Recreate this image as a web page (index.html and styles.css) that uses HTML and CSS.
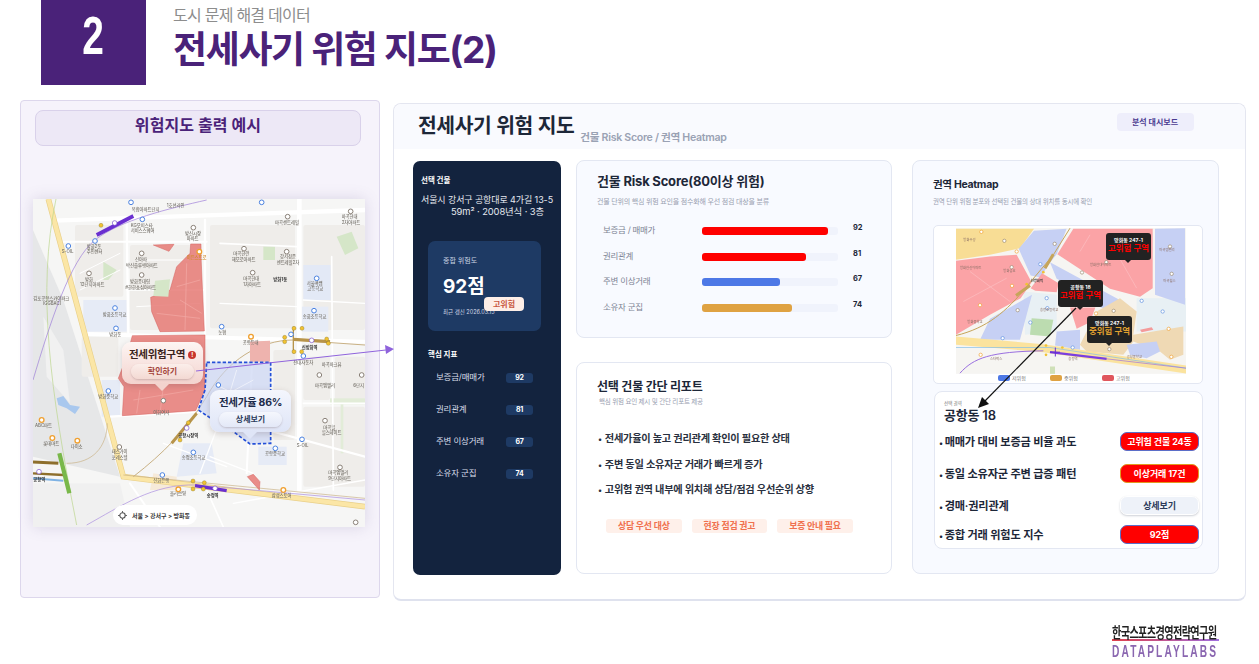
FILE: index.html
```html
<!DOCTYPE html>
<html lang="ko">
<head>
    <meta charset="UTF-8">
    <title>전세사기 위험 지도(2)</title>
    <link rel="stylesheet" href="styles.css">
</head>
<body>
    <header class="top">
        <div class="num"><span>2</span></div>
        <div class="heads">
            <p class="sub">도시 문제 해결 데이터</p>
            <h1 class="title">전세사기 위험 지도(2)</h1>
        </div>
    </header>

    <main class="main">
        <section class="left">
            <div class="left-head">위험지도 출력 예시</div>
            <div class="map">
                <svg class="map-svg" viewBox="39 27 996 984" width="332" height="328">
                    <rect x="39" y="27" width="996" height="984" fill="#f6f6f5"/>
                    <!-- blocks -->
                    <polygon points="39,120 130,330 300,860 39,800" fill="#e6e7e8"/>
                    <polygon points="70,380 130,480 150,640 80,560" fill="#f1f1f1"/>
                    <polygon points="39,880 300,880 330,1011 39,1011" fill="#f0f0f0"/>
                    <g fill="#efedea">
                        <rect x="165" y="105" width="145" height="215" rx="6"/>
                        <rect x="330" y="165" width="215" height="255" rx="6"/>
                        <rect x="570" y="105" width="255" height="310" rx="6"/>
                        <rect x="850" y="105" width="185" height="315" rx="6"/>
                        <rect x="850" y="500" width="80" height="130" rx="6"/>
                        <rect x="945" y="500" width="90" height="130" rx="6"/>
                        <rect x="850" y="650" width="185" height="240" rx="6"/>
                        <rect x="760" y="480" width="65" height="270" rx="6"/>
                        <rect x="185" y="440" width="110" height="120" rx="6"/>
                    </g>
                    <rect x="190" y="330" width="130" height="95" fill="#e6ebf6"/>
                    <rect x="850" y="225" width="82" height="105" fill="#e3e9f6"/>
                    <rect x="845" y="350" width="80" height="75" fill="#e6ebf6"/>
                    <rect x="245" y="570" width="55" height="110" fill="#e6ebf6"/>
                    <rect x="715" y="770" width="85" height="55" fill="#e6ebf6"/>
                    <polygon points="490,760 575,760 590,850 470,860" fill="#e6ebf6"/>
                    <polygon points="400,850 470,860 470,900 390,900" fill="#f6ead9"/>
                    <polygon points="250,215 290,240 265,270 250,270" fill="#d5e6c8"/>
                    <polygon points="950,140 995,125 1015,175 975,195" fill="#d5e6c8"/>
                    <rect x="730" y="170" width="35" height="40" fill="#d5e6c8"/>
                    <rect x="930" y="625" width="105" height="18" fill="#e2ecd8"/>
                    <rect x="962" y="640" width="8" height="150" fill="#e2ecd8"/>
                    <path d="M110 625 L130 618 L150 645 L180 650 L165 672 L140 655 L115 645 Z" fill="#a9c8ee"/>
                    <!-- roads -->
                    <g fill="none" stroke="#fff" stroke-linecap="round">
                        <path d="M100 92 L1035 60" stroke-width="13"/>
                        <path d="M838 27 L838 900" stroke-width="14"/>
                        <path d="M200 432 L1035 455" stroke-width="12"/>
                        <path d="M320 95 L325 430" stroke-width="7"/>
                        <path d="M555 90 L555 430" stroke-width="7"/>
                        <path d="M130 155 L560 155" stroke-width="6"/>
                        <path d="M270 680 L540 665 L1035 800" stroke-width="7"/>
                        <path d="M700 440 L680 850" stroke-width="6"/>
                        <path d="M935 200 L940 900" stroke-width="5"/>
                        <path d="M600 160 L830 170" stroke-width="5"/>
                        <path d="M600 340 L830 350" stroke-width="4"/>
                        <path d="M320 300 L550 300" stroke-width="4"/>
                        <path d="M850 330 L1035 340" stroke-width="4"/>
                        <path d="M850 640 L1035 640" stroke-width="5"/>
                        <path d="M330 880 L420 1011" stroke-width="6"/>
                        <path d="M560 900 L610 1011" stroke-width="5"/>
                        <path d="M640 940 L1035 870" stroke-width="4"/>
                        <path d="M600 690 L540 850 M430 760 L620 830 M700 850 L570 800" stroke-width="4"/>
                        <path d="M180 250 L300 190 M180 300 L300 240 M350 210 L540 210 M350 350 L540 340" stroke-width="3"/>
                    </g>
                    <g fill="none" stroke-linecap="butt">
                        <path d="M85 27 L310 860 L1035 950" stroke="#e9d08a" stroke-width="17"/>
                        <path d="M85 27 L310 860 L1035 950" stroke="#fbe6a6" stroke-width="13"/>
                        <path d="M108 27 C50 300 90 600 170 1005" stroke="#b9d48a" stroke-width="2"/>
                        <path d="M39 570 C90 400 150 210 225 150 C300 90 450 55 560 30" stroke="#9a78d8" stroke-width="2"/>
                        <path d="M230 135 L340 78" stroke="#6a2fd0" stroke-width="11"/>
                        <path d="M200 1005 C300 950 400 880 530 885 L1035 930" stroke="#a88ae0" stroke-width="2"/>
                        <path d="M340 860 C430 790 500 720 560 620 C620 510 720 450 820 450 L1035 465" stroke="#c9b184" stroke-width="3"/>
                        <path d="M140 820 C220 820 260 770 262 700" stroke="#c9b184" stroke-width="2"/>
                        <path d="M310 855 L1035 925" stroke="#c9b184" stroke-width="2"/>
                        <path d="M455 760 L530 670" stroke="#b8944a" stroke-width="9"/>
                        <path d="M820 448 L930 455" stroke="#b8944a" stroke-width="10"/>
                        <path d="M820 410 L820 490" stroke="#b8944a" stroke-width="4"/>
                        <path d="M525 887 L620 902" stroke="#6a2fd0" stroke-width="10"/>
                        <path d="M39 816 L115 820" stroke="#8e6f2c" stroke-width="9"/>
                        <path d="M39 850 L130 855" stroke="#8e6f2c" stroke-width="7"/>
                        <path d="M39 865 L130 872" stroke="#7eb2e4" stroke-width="6"/>
                        <path d="M118 790 L148 910" stroke="#79b84a" stroke-width="13"/>
                    </g>
                    <!-- zones -->
                    <g fill="#e67a75" fill-opacity=".85" stroke="#d4605c" stroke-width="1.5">
                        <polygon points="400,165 462,163 447,184"/>
                        <polygon points="512,162 543,162 543,200 553,423 420,425 395,365 392,322 450,300 470,230 510,190"/>
                        <polygon points="337,437 555,435 555,600 527,662 307,677 312,590 295,565 320,500"/>
                        <polygon points="682,860 700,853 720,875 718,900"/>
                    </g>
                    <path d="M470 290 L540 270 M480 330 L545 370 M410 370 L540 385 M500 220 L495 420 M340 630 L520 600 M430 590 L420 670 M360 600 L350 670" fill="none" stroke="#f3aaa6" stroke-width="2"/>
                    <polygon points="690,455 750,452 750,515 690,515" fill="#eeb3ae"/>
                    <polygon points="405,272 450,268 445,320 400,318" fill="#d5e6c8"/>
                    <polygon points="560,517 752,517 752,760 690,762 640,725 580,690 535,660 555,600" fill="#c7d3f3" fill-opacity=".65" stroke="#2450d8" stroke-width="5" stroke-dasharray="10 6"/>
                    <path d="M600 590 L700 640 M650 540 L620 640 M570 640 L700 570" fill="none" stroke="#eef1fb" stroke-width="3"/>
                    <!-- labels -->
                    <g class="m-label">
                        <text x="335" y="62">복합아파트단지</text>
                        <text x="440" y="50">1호선라인</text>
                        <text x="332" y="110">KG오피스타</text>
                        <text x="332" y="125">서비스스퀘어</text>
                        <text x="495" y="135">방신시장</text>
                        <text x="500" y="150">아파트</text>
                        <text x="200" y="175">방화2동</text>
                        <text x="200" y="190">주민센터</text>
                        <text x="345" y="212">신아파</text>
                        <text x="318" y="230">박신플루맹아파트</text>
                        <text x="330" y="280">방화풍대림</text>
                        <text x="316" y="297">#한한쇼심아파트</text>
                        <text x="195" y="272">방화</text>
                        <text x="180" y="288">12단지아파트</text>
                        <text x="640" y="195">마곡한란</text>
                        <text x="635" y="214">해모로아파트</text>
                        <text x="780" y="204">강서청운</text>
                        <text x="770" y="221">센트레빌2차</text>
                        <text x="670" y="270">마곡현대</text>
                        <text x="670" y="288">1차아파트</text>
                        <text x="760" y="272" class="m-dark">방화1동</text>
                        <text x="765" y="102">마곡센트레빌</text>
                        <text x="965" y="85">마곡현대</text>
                        <text x="965" y="102">2차아파트</text>
                        <text x="860" y="285">서울맥쌤</text>
                        <text x="862" y="300">고등학교</text>
                        <text x="848" y="385">송화초등학교</text>
                        <text x="248" y="378">방화초등학교</text>
                        <text x="268" y="438">방화동</text>
                        <text x="235" y="625">방화중학교</text>
                        <text x="475" y="742" class="m-dark">공항시장역</text>
                        <text x="485" y="808">송정초등학교</text>
                        <text x="275" y="790">태스가이</text>
                        <text x="275" y="808">포레스텔</text>
                        <text x="735" y="795">공항중학교</text>
                        <text x="830" y="770">S-OIL</text>
                        <text x="125" y="190">S-OIL</text>
                        <text x="910" y="718">마곡힐</text>
                        <text x="905" y="733">힐스테이트</text>
                        <text x="925" y="852">마곡엠밸리</text>
                        <text x="925" y="870">9단지아파트</text>
                        <text x="885" y="592">마곡엠밸리</text>
                        <text x="1000" y="592">6단지</text>
                        <text x="905" y="527">마곡파크뷰</text>
                        <text x="820" y="522">전대자동차</text>
                        <text x="845" y="476" class="m-dark">신방화역</text>
                        <text x="668" y="463">공항등대</text>
                        <text x="595" y="431">농협</text>
                        <text x="45" y="712">ABC마트</text>
                        <text x="70" y="765">롯데마트</text>
                        <text x="152" y="774">다이소</text>
                        <text x="40" y="872" class="m-dark">공항역</text>
                        <text x="400" y="876">신화은행</text>
                        <text x="450" y="916">올리브영</text>
                        <text x="560" y="922" class="m-dark">송정역</text>
                        <text x="755" y="922">삼성스토어</text>
                        <text x="40" y="330">김포공항스카이파크</text>
                        <text x="68" y="344">(GGBAC)</text>
                        <text x="500" y="206" class="m-orange">이든스트로</text>
                        <text x="400" y="672">이화여자</text>
                    </g>
                    <g fill="#fff" stroke="#8a8178" stroke-width="3">
                        <circle cx="520" cy="113" r="7"/><circle cx="365" cy="190" r="7"/>
                        <circle cx="207" cy="250" r="7"/><circle cx="365" cy="255" r="7"/>
                        <circle cx="672" cy="176" r="7"/><circle cx="800" cy="185" r="7"/>
                        <circle cx="803" cy="80" r="7"/><circle cx="992" cy="64" r="7"/>
                        <circle cx="698" cy="248" r="7"/><circle cx="298" cy="771" r="7"/>
                        <circle cx="915" cy="692" r="7"/><circle cx="960" cy="832" r="7"/>
                        <circle cx="898" cy="555" r="7"/><circle cx="1025" cy="555" r="7"/>
                        <circle cx="430" cy="632" r="7"/><circle cx="1007" cy="997" r="7"/>
                    </g>
                    <g fill="#fff" stroke="#4b82e0" stroke-width="3">
                        <circle cx="145" cy="168" r="7"/><circle cx="225" cy="153" r="7"/>
                        <circle cx="367" cy="88" r="7"/><circle cx="333" cy="37" r="7"/>
                        <circle cx="725" cy="37" r="7"/><circle cx="285" cy="354" r="7"/>
                        <circle cx="288" cy="415" r="7"/><circle cx="265" cy="603" r="7"/>
                        <circle cx="605" cy="410" r="7"/><circle cx="595" cy="585" r="7"/>
                        <circle cx="882" cy="362" r="7"/><circle cx="890" cy="265" r="7"/>
                        <circle cx="846" cy="748" r="7"/><circle cx="766" cy="775" r="7"/>
                        <circle cx="520" cy="787" r="7"/><circle cx="427" cy="855" r="7"/>
                        <circle cx="813" cy="433" r="7"/><circle cx="850" cy="498" r="7"/>
                    </g>
                    <g fill="#fff" stroke="#f0a030" stroke-width="4">
                        <circle cx="65" cy="690" r="7"/><circle cx="97" cy="744" r="7"/>
                        <circle cx="172" cy="752" r="7"/><circle cx="693" cy="440" r="7"/>
                        <circle cx="538" cy="185" r="7"/><circle cx="475" cy="898" r="7"/>
                        <circle cx="790" cy="900" r="7"/>
                    </g>
                    <g fill="#f1c232" stroke="#7a6a20" stroke-width="1">
                        <circle cx="243" cy="106" r="6"/><circle cx="822" cy="415" r="6"/>
                        <circle cx="846" cy="415" r="6"/><circle cx="794" cy="442" r="6"/>
                        <circle cx="794" cy="455" r="6"/><circle cx="822" cy="485" r="6"/>
                        <circle cx="845" cy="485" r="6"/><circle cx="920" cy="447" r="6"/>
                        <circle cx="925" cy="460" r="6"/><circle cx="505" cy="698" r="6"/>
                        <circle cx="480" cy="750" r="6"/><circle cx="519" cy="873" r="6"/>
                        <circle cx="519" cy="897" r="6"/><circle cx="553" cy="878" r="6"/>
                        <circle cx="550" cy="897" r="6"/>
                    </g>
                    <g fill="#fff" stroke="#7a4fd0" stroke-width="2">
                        <circle cx="284" cy="99" r="7"/><circle cx="585" cy="895" r="7"/>
                        <circle cx="875" cy="451" r="7"/><circle cx="500" cy="714" r="7"/>
                        <circle cx="57" cy="845" r="7"/>
                    </g>
                </svg>

                <div class="callout callout-red">
                    <div class="callout-title">전세위험구역 <i class="alert">!</i></div>
                    <div class="callout-btn btn-red">확인하기</div>
                </div>
                <div class="callout callout-blue">
                    <div class="callout-title title-navy">전세가율 86%</div>
                    <div class="callout-btn btn-blue">상세보기</div>
                </div>
                <div class="crumb">
                    <svg width="9" height="9" viewBox="0 0 10 10"><circle cx="5" cy="5" r="3" fill="none" stroke="#555" stroke-width="1.2"/><path d="M5 0v2M5 8v2M0 5h2M8 5h2" stroke="#555" stroke-width="1"/></svg>
                    <span>서울 &gt; 강서구 &gt; 방화동</span>
                </div>
            </div>
        </section>

        <section class="dash">
            <div class="dash-head">
                <h2>전세사기 위험 지도</h2>
                <span class="dash-sub">건물 Risk Score / 권역 Heatmap</span>
                <span class="dash-tag">분석 대시보드</span>
            </div>
            <div class="dash-body">
                <aside class="side">
                    <div class="side-label">선택 건물</div>
                    <div class="side-addr">서울시 강서구 공항대로 4가길 13-5</div>
                    <div class="side-addr2">59m² · 2008년식 · 3층</div>
                    <div class="score">
                        <div class="score-label">종합 위험도</div>
                        <div class="score-num">92점</div>
                        <div class="score-badge">고위험</div>
                        <div class="score-date">최근 갱신 2026.03.15</div>
                    </div>
                    <div class="side-sec">핵심 지표</div>
                    <div class="kpi"><span>보증금/매매가</span><b>92</b></div>
                    <div class="kpi"><span>권리관계</span><b>81</b></div>
                    <div class="kpi"><span>주변 이상거래</span><b>67</b></div>
                    <div class="kpi"><span>소유자 군집</span><b>74</b></div>
                </aside>

                <div class="mid">
                    <div class="card card-score">
                        <h3>건물 Risk Score(80이상 위험)</h3>
                        <p class="card-sub">건물 단위의 핵심 위험 요인을 점수화해 우선 점검 대상을 분류</p>
                        <div class="bar-row"><span class="bar-name">보증금 / 매매가</span><div class="bar"><i class="fill red" style="width:126px"></i></div><b>92</b></div>
                        <div class="bar-row"><span class="bar-name">권리관계</span><div class="bar"><i class="fill red" style="width:104px"></i></div><b>81</b></div>
                        <div class="bar-row"><span class="bar-name">주변 이상거래</span><div class="bar"><i class="fill blue" style="width:78px"></i></div><b>67</b></div>
                        <div class="bar-row"><span class="bar-name">소유자 군집</span><div class="bar"><i class="fill gold" style="width:90px"></i></div><b>74</b></div>
                    </div>
                    <div class="card card-report">
                        <h3>선택 건물 간단 리포트</h3>
                        <p class="card-sub">핵심 위험 요인 제시 및 간단 리포트 제공</p>
                        <ul class="report">
                            <li>전세가율이 높고 권리관계 확인이 필요한 상태</li>
                            <li>주변 동일 소유자군 거래가 빠르게 증가</li>
                            <li>고위험 권역 내부에 위치해 상담/점검 우선순위 상향</li>
                        </ul>
                        <div class="tags">
                            <span>상담 우선 대상</span>
                            <span>현장 점검 권고</span>
                            <span>보증 안내 필요</span>
                        </div>
                    </div>
                </div>

                <div class="card card-heat">
                    <h4>권역 Heatmap</h4>
                    <p class="card-sub">권역 단위 위험 분포와 선택된 건물의 상대 위치를 동시에 확인</p>
                    <div class="heat-box">
                        <div class="heat-map">
                            <svg class="heat-svg" viewBox="138 220 690 437" width="230" height="146">
                                <rect x="138" y="220" width="690" height="437" fill="#f6f5f2"/>
                                <rect x="680" y="430" width="148" height="100" fill="#e8f0f4"/>
                                <polygon points="340,410 440,420 440,530 345,540" fill="#e8f0f4"/>
                                <polygon points="365,490 430,495 420,545 360,540" fill="#bcdcb0"/>
                                <polygon points="138,222 372,222 330,280 240,300 138,315" fill="#f8dd95"/>
                                <polygon points="138,318 240,305 320,300 365,382 332,430 240,480 138,540" fill="#fba3a6"/>
                                <polygon points="372,228 470,222 440,298 415,330 392,368 362,362 326,282" fill="#c6d0f4"/>
                                <polygon points="490,222 728,222 728,400 690,426 600,402 442,298" fill="#fba3a6"/>
                                <polygon points="420,322 628,435 600,466 555,452 515,410 440,372" fill="#c6d0f4"/>
                                <polygon points="735,222 825,220 825,450 735,420" fill="#c6d0f4"/>
                                <polygon points="396,355 446,385 440,412 376,408 362,400" fill="#fba3a6"/>
                                <polygon points="480,458 556,458 540,502 500,522" fill="#fba3a6"/>
                                <polygon points="366,420 330,555 210,555 240,492" fill="#c6d0f4"/>
                                <polygon points="630,430 680,470 670,540 820,515 820,600 780,615 750,590 670,560 640,600 530,590 510,570 560,470" fill="#efd9b4"/>
                                <polygon points="440,530 510,525 510,585 435,572" fill="#c6d0f4"/>
                                <polygon points="650,570 740,560 750,590 710,610 660,600" fill="#c6d0f4"/>
                                <polygon points="690,525 725,517 730,525 695,532" fill="#f49a9a"/>
                                <polygon points="138,545 400,568 828,632 828,656 400,592 138,570" fill="#fbe39e"/>
                                <path d="M138 578 L420 578 L828 640" fill="none" stroke="#80bde8" stroke-width="2"/>
                                <path d="M150 655 C190 610 240 590 400 588" fill="none" stroke="#9a6fe0" stroke-width="3"/>
                                <path d="M420 592 L590 612" fill="none" stroke="#7a3fe0" stroke-width="7"/>
                                <path d="M590 612 L828 640" fill="none" stroke="#9a6fe0" stroke-width="2"/>
                                <path d="M436 578 L436 605 M420 592 L450 592" fill="none" stroke="#6a2fd0" stroke-width="3"/>
                                <path d="M138 542 C230 520 290 470 350 395 L430 300 L480 220" fill="none" stroke="#c6a55a" stroke-width="3"/>
                                <path d="M318 422 L360 392 M405 340 L430 298" fill="none" stroke="#c6a55a" stroke-width="9"/>
                                <rect x="420" y="635" width="15" height="22" fill="#cfe0b8"/>
                                <path d="M540 240 L510 290 M600 260 L680 400 M180 350 L300 440 M160 440 L290 370" fill="none" stroke="#fcc0c2" stroke-width="2"/>
                                <g fill="#fff" stroke="#9a8a70" stroke-width="2">
                                    <circle cx="283" cy="258" r="5"/><circle cx="305" cy="337" r="5"/>
                                    <circle cx="434" cy="267" r="5"/><circle cx="589" cy="322" r="5"/>
                                    <circle cx="516" cy="353" r="5"/><circle cx="780" cy="275" r="5"/>
                                    <circle cx="785" cy="357" r="5"/><circle cx="323" cy="466" r="5"/>
                                    <circle cx="611" cy="468" r="5"/><circle cx="598" cy="583" r="5"/>
                                </g>
                                <g fill="#fff" stroke="#f0a030" stroke-width="2">
                                    <circle cx="214" cy="231" r="5"/><circle cx="320" cy="290" r="5"/>
                                    <circle cx="210" cy="451" r="5"/><circle cx="306" cy="393" r="5"/>
                                    <circle cx="558" cy="476" r="5"/><circle cx="776" cy="522" r="5"/>
                                    <circle cx="784" cy="606" r="5"/><circle cx="212" cy="600" r="5"/>
                                </g>
                                <g fill="#fff" stroke="#5a8ee0" stroke-width="2">
                                    <circle cx="391" cy="328" r="5"/><circle cx="410" cy="430" r="5"/>
                                    <circle cx="412" cy="460" r="5"/><circle cx="361" cy="503" r="5"/>
                                    <circle cx="695" cy="438" r="5"/><circle cx="758" cy="470" r="5"/>
                                    <circle cx="278" cy="550" r="5"/><circle cx="488" cy="578" r="5"/>
                                </g>
                                <g fill="#f1c232">
                                    <circle cx="400" cy="352" r="4"/><circle cx="350" cy="388" r="4"/>
                                    <circle cx="408" cy="572" r="4"/><circle cx="457" cy="578" r="4"/>
                                    <circle cx="408" cy="600" r="4"/>
                                </g>
                                <g class="h-label">
                                    <text x="160" y="258">방화우성</text>
                                    <text x="150" y="343">방화한신아파트</text>
                                    <text x="280" y="352">방화금호</text>
                                    <text x="362" y="382" class="m-dark">신방화역</text>
                                    <text x="540" y="335">방화현대아파트</text>
                                    <text x="748" y="290">마곡엠밸리</text>
                                    <text x="760" y="382">마곡힐스</text>
                                    <text x="390" y="470">송정초등학교</text>
                                    <text x="172" y="504">방화중학교</text>
                                    <text x="475" y="616">송정역</text>
                                    <text x="650" y="610">공항중학교</text>
                                    <text x="240" y="615">스타벅스</text>
                                </g>
                            </svg>
                            <div class="pin pin-a"><small>공항동 18</small><b class="hi">고위험 구역</b></div>
                            <div class="pin pin-b"><small>방화동 247-1</small><b class="hi">고위험 구역</b></div>
                            <div class="pin pin-c"><small>방화동 247-1</small><b class="md">중위험 구역</b></div>
                        </div>
                        <div class="legend">
                            <span><i class="sw sw-low"></i>저위험</span>
                            <span><i class="sw sw-mid"></i>중위험</span>
                            <span><i class="sw sw-high"></i>고위험</span>
                        </div>
                    </div>
                    <div class="detail">
                        <div class="detail-label">선택 권역</div>
                        <div class="detail-name">공항동 18</div>
                        <div class="d-row"><span>매매가 대비 보증금 비율 과도</span><b class="pill pill-blue">고위험 건물 24동</b></div>
                        <div class="d-row"><span>동일 소유자군 주변 급증 패턴</span><b class="pill pill-orange">이상거래 17건</b></div>
                        <div class="d-row"><span>경매·권리관계</span><b class="pill pill-light">상세보기</b></div>
                        <div class="d-row d-last"><span>종합 거래 위험도 지수</span><b class="pill pill-blue">92점</b></div>
                    </div>
                </div>
            </div>
        </section>
    </main>

    <footer class="foot">
        <div class="logo">
            <div class="logo-ko"><span>한국스포츠경영전략연구원</span></div>
            <div class="logo-en"><span>DATAPLAYLABS</span></div>
        </div>
    </footer>

    <!-- arrows run across panels -->
    <svg class="arrows" width="1259" height="664">
        <line x1="196" y1="371" x2="386" y2="350" stroke="#8f63dc" stroke-width="1"/>
        <polygon points="394,349 385,345 386,354" fill="#8f63dc"/>
        <line x1="1076" y1="308" x2="984" y2="402" stroke="#111" stroke-width="1.2"/>
        <polygon points="978,408 982,397 989,404" fill="#111"/>
    </svg>
</body>
</html>
```

FILE: styles.css
```css
* {
    box-sizing: border-box;
}
body {
    margin: 0;
    width: 1259px;
    height: 664px;
    overflow: hidden;
    position: relative;
    background: #fff;
    font-family: Inter, "Noto Sans CJK KR", sans-serif;
    color: #1d2738;
}
h1, h2, h3, h4, p, ul {
    margin: 0;
    padding: 0;
}

/* top title */
.top {
    display: flex;
    height: 85px;
    padding-left: 41px;
}
.num {
    width: 105px;
    height: 85px;
    background: #4a2279;
    color: #fff;
    display: flex;
    justify-content: center;
    padding-top: 5px;
}
.num span {
    font: bold 54px/60px "Liberation Sans", sans-serif;
    transform: scaleX(.72);
}
.heads {
    padding-left: 27px;
}
.sub {
    font-size: 16px;
    line-height: 20px;
    margin-top: 5px;
    color: #8d8d8d;
    letter-spacing: -.75px;
}
.title {
    font-size: 37px;
    line-height: 46px;
    margin-top: 2px;
    font-weight: 700;
    color: #4a2279;
    letter-spacing: -1.35px;
}

/* layout */
.main {
    display: flex;
    gap: 13px;
    padding: 15px 0 0 20px;
}

/* left panel */
.left {
    width: 360px;
    height: 498px;
    background: #f6f3fb;
    border: 1px solid #ddd7ec;
    border-radius: 4px;
    padding: 9px 18px 0 12px;
}
.left-head {
    margin-left: 2px;
    width: 326px;
    height: 36px;
    background: #ede8f6;
    border: 1px solid #d9d1ea;
    border-radius: 8px;
    text-align: center;
    font-size: 16px;
    line-height: 28px;
    font-weight: 700;
    color: #4a2279;
    letter-spacing: .1px;
}
.map {
    position: relative;
    width: 332px;
    height: 328px;
    margin-top: 53px;
    box-shadow: 0 0 14px rgba(90, 80, 130, .18);
}
.map-svg {
    display: block;
    filter: blur(.4px);
}
.m-label text {
    font-size: 13px;
    fill: #77736c;
    font-weight: 500;
}
.m-label .m-dark, .h-label .m-dark {
    fill: #333;
    font-weight: 700;
}
.m-label .m-orange {
    fill: #d08a2a;
}
.h-label text {
    font-size: 10px;
    fill: #8b6f66;
}
.callout {
    position: absolute;
    width: 81px;
    height: 42px;
    border-radius: 9px;
    box-shadow: 0 2px 6px rgba(80, 60, 60, .22);
    display: flex;
    flex-direction: column;
    align-items: center;
    padding-top: 5px;
}
.callout::after {
    content: "";
    position: absolute;
    left: 33px;
    bottom: -7px;
    border: 7px solid transparent;
    border-bottom: 0;
    border-top-color: inherit;
}
.callout-red {
    left: 89px;
    top: 143px;
    background: linear-gradient(#fdf5f3, #f3d3ce);
    border-top-color: #f3d3ce;
}
.callout-blue {
    left: 177px;
    top: 191px;
    height: 42px;
    background: linear-gradient(#f4f6fd, #dfe5f7);
    border-top-color: #dfe5f7;
}
.callout-title {
    font-size: 10.5px;
    line-height: 15px;
    font-weight: 700;
    color: #3a2420;
    letter-spacing: -.3px;
    white-space: nowrap;
    display: flex;
    align-items: center;
    gap: 3px;
}
.title-navy {
    color: #1b2a4a;
}
.alert {
    width: 8px;
    height: 8px;
    border-radius: 50%;
    background: #c8352b;
    color: #fff;
    font-size: 6px;
    line-height: 8px;
    text-align: center;
    font-style: normal;
}
.callout-btn {
    width: 63px;
    height: 15px;
    margin-top: 2px;
    border-radius: 8px;
    font-size: 8px;
    line-height: 15px;
    text-align: center;
    font-weight: 700;
    box-shadow: 0 1px 2px rgba(90, 60, 60, .25);
}
.btn-red {
    background: linear-gradient(#fbeeea, #f3d9d3);
    color: #a3443a;
}
.btn-blue {
    background: linear-gradient(#f5f7fd, #e3e8f7);
    color: #2b3a5a;
}
.crumb {
    position: absolute;
    left: 80px;
    top: 306px;
    width: 84px;
    height: 20px;
    background: #fff;
    border-radius: 10px;
    display: flex;
    align-items: center;
    gap: 5px;
    padding-left: 5px;
    font-size: 6px;
    font-weight: 700;
    color: #333;
    white-space: nowrap;
}

/* dashboard */
.dash {
    width: 853px;
    height: 498px;
    margin-top: 3px;
    background: #fff;
    border: 1px solid #e4e6f0;
    border-bottom: 2px solid #dfe2ee;
    border-radius: 8px;
}
.dash-head {
    height: 45px;
    background: #f9fafe;
    border-radius: 8px 8px 0 0;
    display: flex;
    padding-left: 24px;
}
.dash-head h2 {
    font-size: 20.4px;
    line-height: 30px;
    margin-top: 7px;
    font-weight: 600;
    color: #1d2738;
    letter-spacing: -.4px;
}
.dash-sub {
    font-size: 10.6px;
    font-weight: 600;
    color: #9aa2b4;
    letter-spacing: -.3px;
    margin: 25px 0 0 6px;
}
.dash-tag {
    margin: 9px 0 0 390px;
    width: 77px;
    height: 18px;
    background: #eeeefb;
    border-radius: 4px;
    font-size: 8px;
    line-height: 18px;
    text-align: center;
    font-weight: 700;
    color: #4a3a90;
}
.dash-body {
    display: flex;
    padding: 12px 0 0 19px;
}

/* dark side column */
.side {
    width: 148px;
    height: 414px;
    background: #13233e;
    border-radius: 7px;
    color: #fff;
    padding: 15px 8px 0;
}
.side-label {
    font-size: 7.5px;
    line-height: 10px;
    font-weight: 700;
}
.side-addr {
    font-size: 9px;
    line-height: 12px;
    margin-top: 8px;
    white-space: nowrap;
    color: #e6e9f0;
    letter-spacing: -.1px;
}
.side-addr2 {
    font-size: 9.4px;
    line-height: 12px;
    padding-left: 30px;
    white-space: nowrap;
    color: #e6e9f0;
    letter-spacing: -.1px;
}
.score {
    position: relative;
    width: 113px;
    height: 90px;
    margin: 23px 0 0 7px;
    background: #1e3a64;
    border-radius: 7px;
    padding: 15px 0 0 15px;
}
.score-label {
    font-size: 7px;
    line-height: 9px;
    color: #c8d2e2;
}
.score-num {
    font-size: 19px;
    line-height: 24px;
    font-weight: 700;
    margin-top: 10px;
}
.score-badge {
    position: absolute;
    left: 56px;
    top: 56px;
    width: 40px;
    height: 14px;
    background: #fdeee7;
    border-radius: 4px;
    color: #c9583f;
    font-size: 8px;
    line-height: 14px;
    text-align: center;
    font-weight: 700;
}
.score-date {
    font-size: 5.5px;
    line-height: 8px;
    margin-top: 9px;
    color: #d5dbe8;
}
.side-sec {
    font-size: 7.5px;
    line-height: 10px;
    font-weight: 700;
    margin: 19px 0 0 7px;
}
.kpi {
    display: flex;
    justify-content: space-between;
    height: 32px;
    width: 97px;
    margin-left: 15px;
    font-size: 8.5px;
    line-height: 12px;
    color: #d9deea;
    letter-spacing: -.2px;
}
.side-sec + .kpi {
    margin-top: 11px;
}
.kpi b {
    width: 27px;
    height: 10px;
    margin-top: 2px;
    background: #1e3a64;
    border-radius: 3px;
    color: #fff;
    font-size: 7px;
    line-height: 10px;
    text-align: center;
}

/* middle cards */
.mid {
    width: 316px;
    margin: -1px 0 0 15px;
    display: flex;
    flex-direction: column;
    gap: 24px;
}
.card {
    background: #fff;
    border: 1px solid #e3e7f2;
    border-radius: 8px;
}
.card h3 {
    font-size: 13px;
    font-weight: 700;
    letter-spacing: -.2px;
    color: #1d2738;
}
.card-sub {
    font-size: 7px;
    color: #99a0b0;
    letter-spacing: -.2px;
}
.card-score {
    height: 178px;
    background: #f8faff;
    padding: 11px 20px 0;
}
.card-score h3 {
    line-height: 18px;
}
.card-score .card-sub {
    margin: 7px 0 18px;
    line-height: 10px;
}
.bar-row {
    display: flex;
    height: 25.7px;
    padding-left: 6px;
    font-size: 8.5px;
}
.bar-name {
    width: 99px;
    line-height: 10px;
    color: #7d8494;
    letter-spacing: -.3px;
}
.bar {
    width: 136px;
    height: 8px;
    margin-top: 2px;
    background: #f0f3fc;
    border-radius: 3px;
}
.fill {
    display: block;
    height: 8px;
    border-radius: 3px;
}
.red { background: #ff0000; }
.blue { background: #4d78e6; }
.gold { background: #dfa242; }
.bar-row b {
    margin: -2px 0 0 15px;
    font-size: 7.5px;
    line-height: 10px;
}
.card-report {
    height: 212px;
    padding: 15px 20px 0;
}
.card-report h3 {
    font-size: 12px;
    line-height: 17px;
}
.card-report .card-sub {
    font-size: 6.5px;
    line-height: 9px;
    margin: 3px 0 0 2px;
}
.report {
    list-style: none;
    margin-top: 24px;
}
.report li {
    font-size: 10.2px;
    line-height: 14px;
    height: 25.5px;
    font-weight: 600;
    letter-spacing: -.25px;
    color: #2a3140;
    white-space: nowrap;
}
.report li::before {
    content: "•";
    font-size: 8px;
    margin: 0 3px 0 1px;
}
.tags {
    display: flex;
    gap: 10px;
    margin: 11px 0 0 9px;
}
.tags span {
    height: 14px;
    padding: 0 12px;
    background: #fef0ea;
    border-radius: 3px;
    color: #f0714f;
    font-size: 8.9px;
    line-height: 14px;
    font-weight: 700;
    letter-spacing: -.2px;
}

/* heatmap card */
.card-heat {
    width: 307px;
    height: 414px;
    margin: -1px 0 0 20px;
    background: #f8faff;
    padding: 16px 15px 0 20px;
}
.card-heat h4 {
    font-size: 10.5px;
    line-height: 15px;
    font-weight: 700;
    letter-spacing: -.3px;
}
.card-heat .card-sub {
    margin-top: 6px;
    line-height: 9px;
    font-size: 6.5px;
}
.heat-box {
    width: 270px;
    height: 159px;
    margin-top: 18px;
    background: #fff;
    border: 1px solid #e3e7f2;
    border-radius: 5px;
    padding: 2px 0 0 22px;
}
.heat-map {
    position: relative;
    width: 230px;
    height: 146px;
}
.heat-svg {
    display: block;
    filter: blur(.3px);
}
.pin {
    position: absolute;
    width: 45px;
    height: 27px;
    background: #222;
    border-radius: 3px;
    color: #fff;
    text-align: center;
    display: flex;
    flex-direction: column;
    padding-top: 4px;
}
.pin::after {
    content: "";
    position: absolute;
    left: 19px;
    bottom: -3px;
    border: 3px solid transparent;
    border-bottom: 0;
    border-top-color: #222;
}
.pin small {
    font-size: 5px;
    line-height: 6px;
    font-weight: 700;
}
.pin b {
    font-size: 8.5px;
    line-height: 11px;
    white-space: nowrap;
}
.pin .hi { color: #ff0000; }
.pin .md { color: #e0a030; }
.pin-a { left: 102px; top: 52px; }
.pin-b { left: 150px; top: 5px; }
.pin-c { left: 131px; top: 88px; }
.legend {
    display: flex;
    margin: 1px 0 0 42px;
    font-size: 5px;
    line-height: 6px;
    color: #777;
}
.legend span {
    display: flex;
    align-items: center;
    gap: 2px;
    width: 52px;
}
.sw {
    width: 12px;
    height: 6px;
    border-radius: 2px;
}
.sw-low { background: #4d78e6; }
.sw-mid { background: #dfa242; }
.sw-high { background: #e0565c; }
.detail {
    width: 269px;
    height: 158px;
    margin: 7px 0 0 1px;
    background: #fff;
    border: 1px solid #e3e7f2;
    border-radius: 8px;
    padding: 8px 3px 0 4px;
}
.detail-label {
    font-size: 4.5px;
    line-height: 7px;
    color: #777;
    margin-left: 5px;
}
.detail-name {
    font-size: 13px;
    line-height: 17px;
    font-weight: 600;
    margin: 0 0 1px 5px;
    letter-spacing: -.2px;
}
.d-row {
    display: flex;
    justify-content: space-between;
    align-items: center;
    height: 32px;
    font-size: 11.2px;
    font-weight: 600;
    letter-spacing: -.2px;
    color: #1d2738;
}
.d-row span::before {
    content: "• ";
    font-size: 8px;
}
.d-last {
    height: 26px;
}
.pill {
    width: 79px;
    height: 19px;
    border-radius: 7px;
    color: #fff;
    background: #ff0000;
    font-size: 9px;
    line-height: 17px;
    text-align: center;
    font-weight: 700;
    letter-spacing: -.1px;
}
.pill-blue { border: 1px solid #5b6ec8; }
.pill-orange { border: 1px solid #e09a20; }
.pill-light {
    background: #eef2f9;
    color: #2b3a5a;
    box-shadow: 0 1px 2px rgba(60, 70, 100, .25);
    border: 1px solid #fff;
}

/* footer logo */
.foot {
    display: flex;
    justify-content: flex-end;
    padding: 21px 40px 0 0;
}
.logo {
    width: 107px;
    white-space: nowrap;
}
.logo-ko {
    height: 19px;
    border-bottom: 2px solid;
    border-image: linear-gradient(to right, #e0404a, #a06fe0) 1;
}
.logo-ko span {
    display: inline-block;
    font: bold 14.5px/16px "Noto Sans CJK KR", sans-serif;
    letter-spacing: -.9px;
    color: #222;
    transform: scaleX(.7);
    transform-origin: left;
}
.logo-en span {
    display: inline-block;
    font: bold 17px/16px "Liberation Sans", sans-serif;
    letter-spacing: 3.5px;
    color: #8a66b0;
    transform: scaleX(.6);
    transform-origin: left;
}
.arrows {
    position: absolute;
    left: 0;
    top: 0;
    pointer-events: none;
}
```
